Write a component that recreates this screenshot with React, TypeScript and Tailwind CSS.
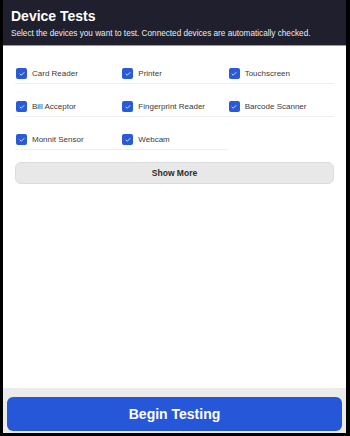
import { Check } from "lucide-react";

const devices = [
  "Card Reader",
  "Printer",
  "Touchscreen",
  "Bill Acceptor",
  "Fingerprint Reader",
  "Barcode Scanner",
  "Monnit Sensor",
  "Webcam",
];

export default function App() {
  return (
    <div
      className="flex h-[436px] w-[350px] flex-col border-b-[3px] border-l-[3px] border-r-[4px] border-black bg-white"
      style={{ fontFamily: '"Liberation Sans", Arial, sans-serif' }}
    >
      <header className="h-[46px] border-b border-[#9a9aa3] bg-[#201f2e] pl-[8px] pt-[8px]">
        <h1 className="text-[14px] font-bold leading-[17px] text-white">Device Tests</h1>
        <p className="mt-[4px] text-[8.2px] leading-[10px] text-[#ececf0]">
          Select the devices you want to test. Connected devices are automatically checked.
        </p>
      </header>

      <main className="flex-1 px-[12px] pt-[16px]">
        <div className="grid grid-cols-3 gap-y-[11px]">
          {devices.map((name) => (
            <label
              key={name}
              className="flex h-[22px] items-start gap-[5px] border-b border-[#efefef] pl-[1px] pt-[6px]"
            >
              <span className="flex h-[11px] w-[11px] items-center justify-center rounded-[2px] bg-[#2a5bd7]">
                <Check className="h-[6px] w-[6px] text-white" strokeWidth={3} />
              </span>
              <span className="text-[8px] leading-[11px] text-[#3a3a3a]">{name}</span>
            </label>
          ))}
        </div>

        <button className="mt-[12px] h-[22px] w-full rounded-[6px] border border-[#dcdcdc] bg-[#e8e8e8] text-[8.5px] font-bold text-[#2b2b2b]">
          Show More
        </button>
      </main>

      <footer className="bg-[#ebebeb] px-[4px] pb-[2px] pt-[9px]">
        <button className="h-[34px] w-full rounded-[6px] bg-[#2657d9] text-[14px] font-bold text-white">
          Begin Testing
        </button>
      </footer>
    </div>
  );
}
